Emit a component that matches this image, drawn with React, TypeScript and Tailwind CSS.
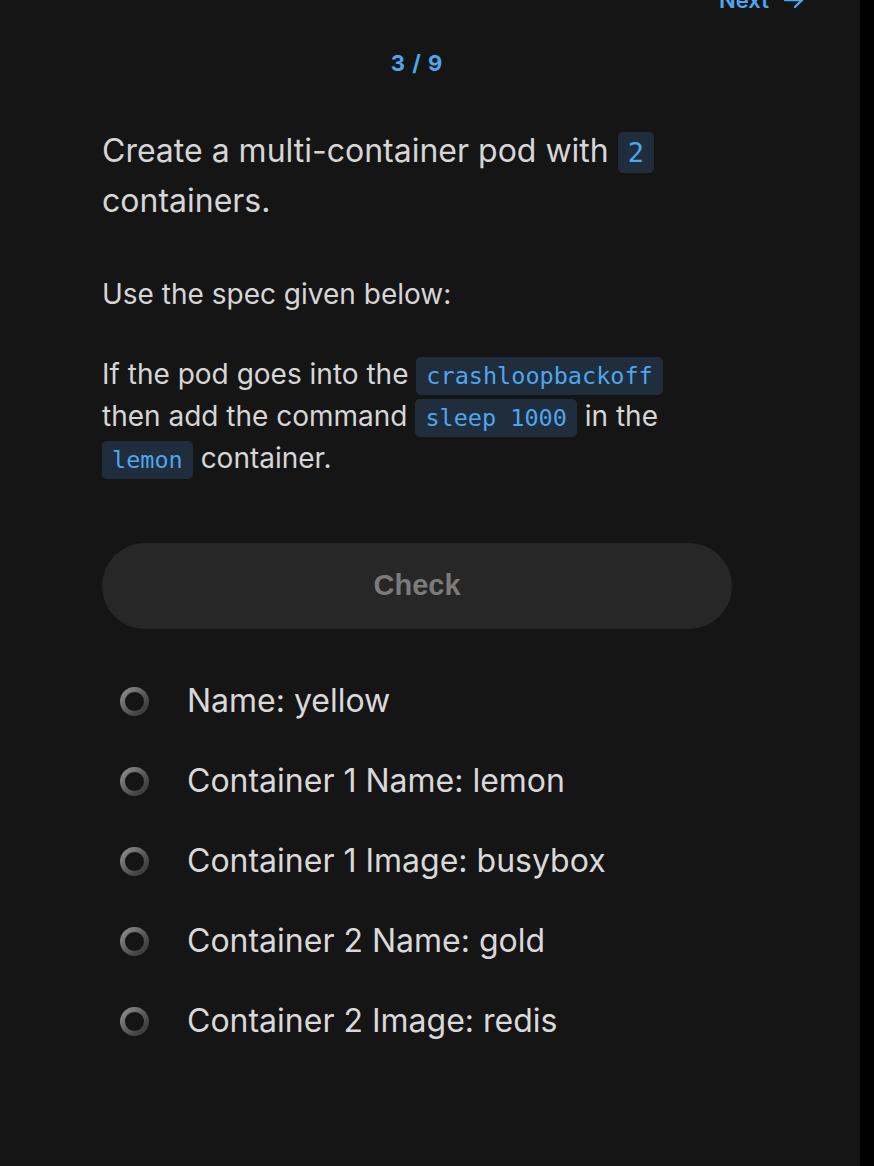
import React from 'react'

const Code: React.FC<{ children: React.ReactNode; big?: boolean }> = ({ children, big }) => (
  <code
    className={
      big
        ? 'rounded-[5px] bg-[#1f2d3c] px-[10px] py-[5px] text-[27px] leading-none text-[#4ea6ee]'
        : 'rounded-[5px] bg-[#1f2d3c] px-[10px] py-[5px] text-[23.5px] leading-none text-[#4ea6ee]'
    }
    style={{ fontFamily: '"DejaVu Sans Mono", "Liberation Mono", monospace' }}
  >
    {children}
  </code>
)

const Radio: React.FC = () => (
  <span className="block h-[29px] w-[29px] shrink-0 rounded-full bg-gradient-to-br from-[#9a9a9a] via-[#5c5c5c] to-[#2e2e2e] p-[5px]">
    <span className="block h-full w-full rounded-full bg-[#151515]" />
  </span>
)

const tasks = [
  'Name: yellow',
  'Container 1 Name: lemon',
  'Container 1 Image: busybox',
  'Container 2 Name: gold',
  'Container 2 Image: redis',
]

export default function App() {
  return (
    <div className="flex min-h-[1166px] w-[874px] overflow-hidden bg-black">
      <div
        className="flex w-[860px] shrink-0 flex-col bg-[#151515] pb-[60px]"
        style={{ fontFamily: 'Inter, "Noto Sans", sans-serif' }}
      >
        <div className="-mt-[11px] flex h-[22px] justify-end pr-[54px]">
          <span className="flex items-center gap-[13px] text-[22px] font-semibold leading-[22px] text-[#4ea6ee]">
            Next
            <svg width="24" height="24" viewBox="0 0 24 24" fill="none" stroke="currentColor" strokeWidth="2.4" strokeLinecap="round" strokeLinejoin="round">
              <path d="M3 12h17" />
              <path d="M13 5l7 7-7 7" />
            </svg>
          </span>
        </div>

        <div className="mt-[41px] ml-[102px] w-[630px] text-center text-[22px] font-bold leading-[22px] tracking-[1px] text-[#4ea6ee]">
          3 / 9
        </div>

        <div className="ml-[102px] w-[630px] text-[#d6d6d6]">
          <p className="mt-[52px] text-[32px] leading-[50px]">
            Create a multi-container pod with <Code big>2</Code> containers.
          </p>
          <p className="mt-[47px] text-[28px] leading-[42px]">Use the spec given below:</p>
          <p className="mt-[38px] w-[600px] text-[28px] leading-[42px]">
            If the pod goes into the <Code>crashloopbackoff</Code> then add the command{' '}
            <Code>sleep 1000</Code> in the <Code>lemon</Code> container.
          </p>

          <button
            className="mt-[64px] flex h-[86px] w-[630px] items-center justify-center rounded-full bg-[#272727] text-[29px] font-bold text-[#7b7b7b]"
            style={{ fontFamily: '"Liberation Sans", Arial, sans-serif' }}
          >
            Check
          </button>

          <ul className="mt-[32px] flex flex-col">
            {tasks.map((t) => (
              <li key={t} className="flex h-[80px] items-center gap-[38px] pl-[18px]">
                <Radio />
                <span className="text-[32px] leading-[40px] text-[#d9d9d9]">{t}</span>
              </li>
            ))}
          </ul>
        </div>
      </div>
    </div>
  )
}
